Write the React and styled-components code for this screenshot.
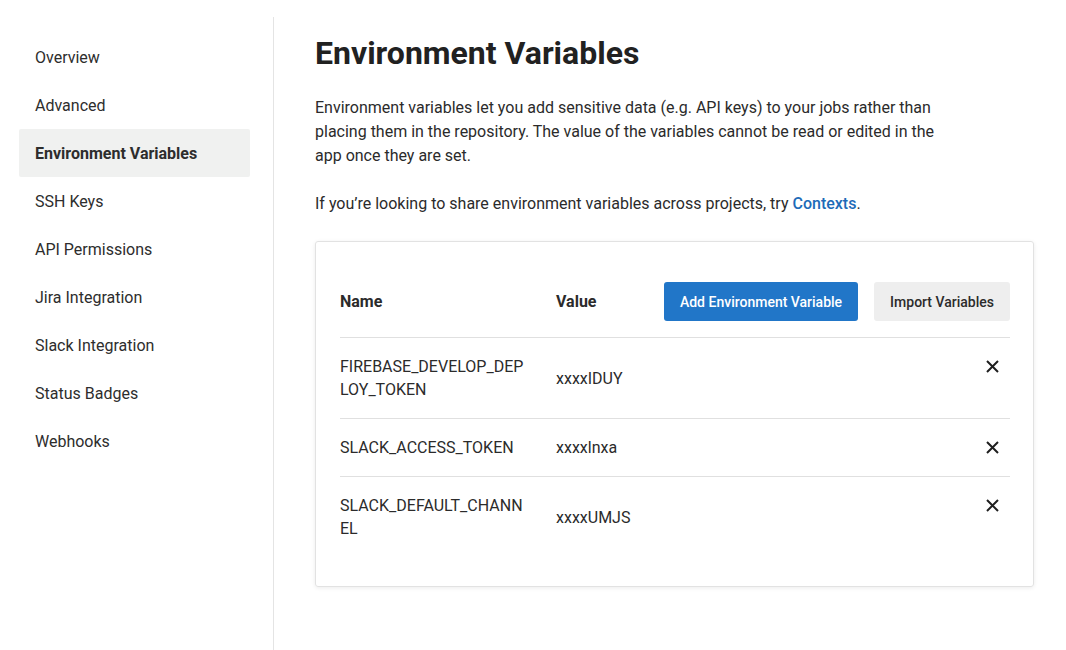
import React from 'react';
import styled, { createGlobalStyle } from 'styled-components';

const GlobalStyle = createGlobalStyle`
  body {
    margin: 0;
    background: #ffffff;
    font-family: Roboto, 'Noto Sans', sans-serif;
    color: #2b2b2b;
  }
`;

const Page = styled.div`
  display: flex;
  height: 650px;
`;

const Sidebar = styled.nav`
  width: 274px;
  margin-top: 17px;
  padding-top: 16px;
  border-right: 1px solid #e4e4e4;
  box-sizing: border-box;
`;

const NavItem = styled.div`
  width: 231px;
  height: 48px;
  margin-left: 19px;
  padding-left: 16px;
  box-sizing: border-box;
  display: flex;
  align-items: center;
  font-size: 16px;
  color: #2d2d2d;
  font-weight: ${p => (p.active ? 700 : 400)};
  background: ${p => (p.active ? '#f0f1f0' : 'transparent')};
  border-radius: 2px;
`;

const Main = styled.main`
  padding: 35px 0 0 41px;
  width: 719px;
`;

const Title = styled.h1`
  margin: 0;
  font-size: 32px;
  line-height: 36px;
  font-weight: 700;
  color: #212121;
`;

const Text = styled.p`
  margin: ${p => p.top || 25}px 0 0;
  max-width: 625px;
  font-size: 16px;
  line-height: 24px;
  color: #2b2b2b;
`;

const Link = styled.a`
  color: #1d6bb8;
  font-weight: 500;
  text-decoration: none;
`;

const Card = styled.div`
  margin-top: 25px;
  border: 1px solid #e2e2e2;
  border-radius: 3px;
  box-shadow: 0 1px 4px rgba(0, 0, 0, 0.08);
  padding: 0 23px 29px 24px;
`;

const HeadRow = styled.div`
  display: flex;
  align-items: center;
  padding: 40px 0 16px;
  border-bottom: 1px solid #e0e0e0;
`;

const Row = styled.div`
  display: flex;
  align-items: center;
  padding: 17px 0;
  border-bottom: ${p => (p.last ? 'none' : '1px solid #e0e0e0')};
`;

const NameCell = styled.div`
  width: 216px;
  padding-right: 26px;
  box-sizing: border-box;
  font-size: 16px;
  line-height: 23px;
  color: #2b2b2b;
  word-break: break-all;
  font-weight: ${p => (p.head ? 700 : 400)};
`;

const ValueCell = styled.div`
  flex: 1;
  font-size: 16px;
  line-height: 23px;
  color: #2b2b2b;
  font-weight: ${p => (p.head ? 700 : 400)};
`;

const Button = styled.button`
  height: 39px;
  border: none;
  border-radius: 3px;
  padding: 0 16px;
  font-family: Roboto, sans-serif;
  font-size: 14px;
  font-weight: 500;
  cursor: pointer;
  color: ${p => (p.primary ? '#ffffff' : '#2b2b2b')};
  background: ${p => (p.primary ? '#2176c8' : '#eeeeee')};
  margin-left: ${p => p.gap || 0}px;
`;

const Remove = styled.button`
  align-self: flex-start;
  width: 36px;
  height: 23px;
  border: none;
  background: none;
  padding: 0;
  display: flex;
  align-items: center;
  justify-content: center;
  cursor: pointer;
`;

const Cross = () => (
  <svg width="13" height="13" viewBox="0 0 13 13">
    <path d="M1 1 L12 12 M12 1 L1 12" stroke="#1f1f1f" strokeWidth="2" />
  </svg>
);

const navItems = [
  'Overview',
  'Advanced',
  'Environment Variables',
  'SSH Keys',
  'API Permissions',
  'Jira Integration',
  'Slack Integration',
  'Status Badges',
  'Webhooks',
];

const variables = [
  { name: 'FIREBASE_DEVELOP_DEPLOY_TOKEN', value: 'xxxxIDUY' },
  { name: 'SLACK_ACCESS_TOKEN', value: 'xxxxlnxa' },
  { name: 'SLACK_DEFAULT_CHANNEL', value: 'xxxxUMJS' },
];

export default function App() {
  return (
    <Page>
      <GlobalStyle />
      <Sidebar>
        {navItems.map(item => (
          <NavItem key={item} active={item === 'Environment Variables'}>
            {item}
          </NavItem>
        ))}
      </Sidebar>
      <Main>
        <Title>Environment Variables</Title>
        <Text>
          Environment variables let you add sensitive data (e.g. API keys) to your jobs rather than
          placing them in the repository. The value of the variables cannot be read or edited in the
          app once they are set.
        </Text>
        <Text top={24}>
          If you’re looking to share environment variables across projects, try{' '}
          <Link href="#">Contexts</Link>.
        </Text>
        <Card>
          <HeadRow>
            <NameCell head>Name</NameCell>
            <ValueCell head>Value</ValueCell>
            <Button primary>Add Environment Variable</Button>
            <Button gap={16}>Import Variables</Button>
          </HeadRow>
          {variables.map((v, i) => (
            <Row key={v.name} last={i === variables.length - 1}>
              <NameCell>{v.name}</NameCell>
              <ValueCell>{v.value}</ValueCell>
              <Remove aria-label="Remove">
                <Cross />
              </Remove>
            </Row>
          ))}
        </Card>
      </Main>
    </Page>
  );
}
